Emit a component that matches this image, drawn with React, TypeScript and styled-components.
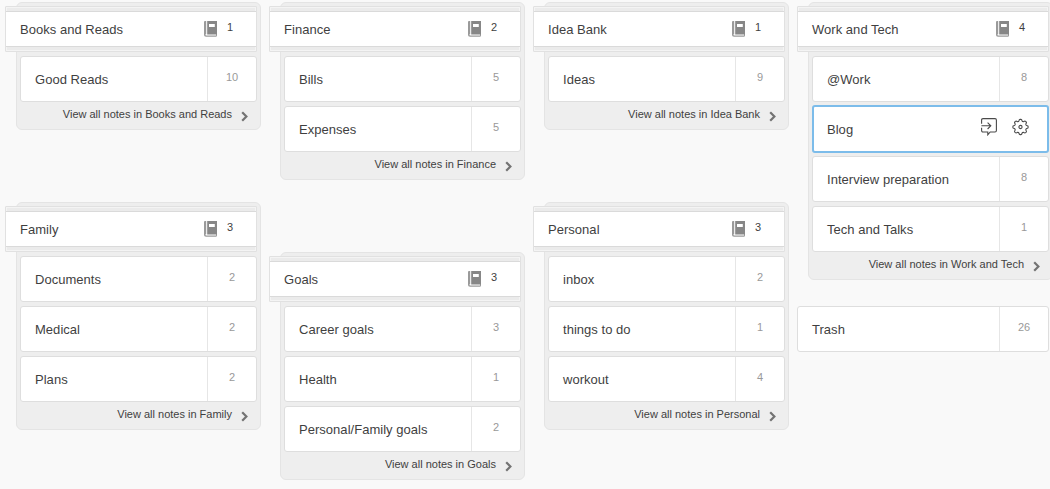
import React from 'react';
import styled, { createGlobalStyle, css } from 'styled-components';

const GlobalStyle = createGlobalStyle`
  * { box-sizing: border-box; }
  html, body { margin: 0; height: 489px; overflow: hidden; background: #f9f9f9; }
  body { font-family: "Liberation Sans", Arial, sans-serif; color: #3f3f3f; }
`;

const Board = styled.main`
  display: flex;
  gap: 8px;
  width: 1061px;
  padding: 2px 0 0 5px;
`;

const Column = styled.div`
  flex: 0 0 256px;
  display: flex;
  flex-direction: column;
  gap: 72px;
`;

const StackPanel = styled.section`
  width: 245px;
  margin-left: 11px;
  padding: 3px 3px 0;
  border: 1px solid #e4e4e4;
  border-radius: 6px;
  background: #eeeeee;
`;

const StackHeader = styled.header`
  width: 252px;
  height: 46px;
  margin: 0 0 4px -15px;
  padding: 4px 0;
  border: 1px solid #e1e1e1;
  border-radius: 1px;
  background: #ebebeb;
  box-shadow: inset 0 0 0 1px #f4f4f4;
`;

const HeaderFace = styled.div`
  display: flex;
  height: 36px;
  padding: 0 0 0 14px;
  border: solid #dadada;
  border-width: 1px 0;
  background: #fff;
`;

const Name = styled.span`
  flex: 1;
  font-size: 13px;
  line-height: 45px;
  letter-spacing: 0.03px;
  white-space: nowrap;
`;

const HeaderName = styled(Name)`
  line-height: 35px;
`;

const HeaderCount = styled.span`
  width: 16px;
  margin: 0 18px 0 5px;
  font-size: 11px;
  line-height: 30px;
  text-align: center;
`;

const BookSvg = styled.svg`
  flex: none;
  width: 13px;
  height: 16px;
  margin-top: 9px;
`;

const Notebooks = styled.div`
  display: flex;
  flex-direction: column;
  gap: 4px;
`;

const NotebookRow = styled.div<{ $active?: boolean; $wide?: boolean }>`
  display: flex;
  width: ${p => (p.$wide ? 252 : 237)}px;
  height: 46px;
  padding-left: 14px;
  border: 1px solid #dedede;
  border-radius: 3px;
  background: #fff;
  ${p => p.$active && css`
    height: 48px;
    margin: -1px 0;
    padding: 0 0 0 13px;
    border: 2px solid #7cbcea;
  `}
`;

const NoteCount = styled.span`
  width: 49px;
  border-left: 1px solid #e6e6e6;
  color: #999;
  font-size: 11px;
  line-height: 40px;
  text-align: center;
`;

const Actions = styled.div`
  display: flex;
  gap: 15px;
  padding: 11px 18px 0 0;
`;

const ActionSvg = styled.svg<{ $width: number }>`
  width: ${p => p.$width}px;
  height: 18px;
  fill: none;
  stroke: #4a4a4a;
  stroke-width: 1.1;
`;

const ViewAll = styled.footer`
  display: flex;
  justify-content: flex-end;
  height: 27px;
  padding-right: 9px;
  font-size: 11px;
  line-height: 24px;
  white-space: nowrap;
`;

const Chevron = styled.svg`
  width: 7px;
  height: 11px;
  margin: 9px 0 0 9px;
  fill: none;
  stroke: #737373;
  stroke-width: 2.2;
`;

const TrashSlot = styled.div`
  margin-top: -46px;
`;

const BookIcon = () => (
  <BookSvg viewBox="0 0 13 16">
    <path d="M0 1Q0 0 1 0H2.2V13.2H1.4Q1.4 14.6 2.4 14.6H12V13H13V14.6Q13 15.8 11.8 15.8H2Q0 15.8 0 14Z" fill="#9a9a9a" />
    <path fillRule="evenodd" d="M3.2 0H13V13.4H3.2ZM5 3V6H10.8V3Z" fill="#878787" />
  </BookSvg>
);

const ShareIcon = () => (
  <ActionSvg viewBox="0 0 16 18" $width={16}>
    <path d="M.6 5.8V2Q.6 .6 2 .6H14Q15.4 .6 15.4 2V12.6Q15.4 14 14 14H9.2L6.8 16.8V14H2Q.6 14 .6 12.6V9.8" />
    <path d="M.4 7.8H9.4M6.6 4.6L9.8 7.8L6.6 11" />
  </ActionSvg>
);

// Eight rounded teeth: the radius swings between root and tip around the hub.
const gearPoints = Array.from({ length: 128 }, (_, i) => {
  const angle = (i / 128) * Math.PI * 2;
  const radius = 6.7 + 0.95 * Math.tanh(1.6 * Math.cos(8 * angle) + 0.3);
  return `${(8.5 + radius * Math.cos(angle)).toFixed(2)},${(9 + radius * Math.sin(angle)).toFixed(2)}`;
}).join(' ');

const GearIcon = () => (
  <ActionSvg viewBox="0 0 17 18" $width={17}>
    <polygon points={gearPoints} />
    <circle cx="8.5" cy="9" r="1.6" />
  </ActionSvg>
);

type Notebook = { name: string; count?: number };

const Stack = ({ name, notebooks }: { name: string; notebooks: Notebook[] }) => (
  <StackPanel>
    <StackHeader>
      <HeaderFace>
        <HeaderName>{name}</HeaderName>
        <BookIcon />
        <HeaderCount>{notebooks.length}</HeaderCount>
      </HeaderFace>
    </StackHeader>
    <Notebooks>
      {notebooks.map(n => (
        <NotebookRow key={n.name} $active={n.count === undefined}>
          <Name>{n.name}</Name>
          {n.count === undefined ? (
            <Actions>
              <ShareIcon />
              <GearIcon />
            </Actions>
          ) : (
            <NoteCount>{n.count}</NoteCount>
          )}
        </NotebookRow>
      ))}
    </Notebooks>
    <ViewAll>
      <span>View all notes in {name}</span>
      <Chevron viewBox="0 0 7 11">
        <path d="M1.2 1.2L5.4 5.5L1.2 9.8" />
      </Chevron>
    </ViewAll>
  </StackPanel>
);

export default function App() {
  return (
    <>
      <GlobalStyle />
      <Board>
        <Column>
          <Stack name="Books and Reads" notebooks={[{ name: 'Good Reads', count: 10 }]} />
          <Stack
            name="Family"
            notebooks={[
              { name: 'Documents', count: 2 },
              { name: 'Medical', count: 2 },
              { name: 'Plans', count: 2 },
            ]}
          />
        </Column>
        <Column>
          <Stack name="Finance" notebooks={[{ name: 'Bills', count: 5 }, { name: 'Expenses', count: 5 }]} />
          <Stack
            name="Goals"
            notebooks={[
              { name: 'Career goals', count: 3 },
              { name: 'Health', count: 1 },
              { name: 'Personal/Family goals', count: 2 },
            ]}
          />
        </Column>
        <Column>
          <Stack name="Idea Bank" notebooks={[{ name: 'Ideas', count: 9 }]} />
          <Stack
            name="Personal"
            notebooks={[
              { name: 'inbox', count: 2 },
              { name: 'things to do', count: 1 },
              { name: 'workout', count: 4 },
            ]}
          />
        </Column>
        <Column>
          <Stack
            name="Work and Tech"
            notebooks={[
              { name: '@Work', count: 8 },
              { name: 'Blog' },
              { name: 'Interview preparation', count: 8 },
              { name: 'Tech and Talks', count: 1 },
            ]}
          />
          <TrashSlot>
            <NotebookRow $wide>
              <Name>Trash</Name>
              <NoteCount>26</NoteCount>
            </NotebookRow>
          </TrashSlot>
        </Column>
      </Board>
    </>
  );
}
